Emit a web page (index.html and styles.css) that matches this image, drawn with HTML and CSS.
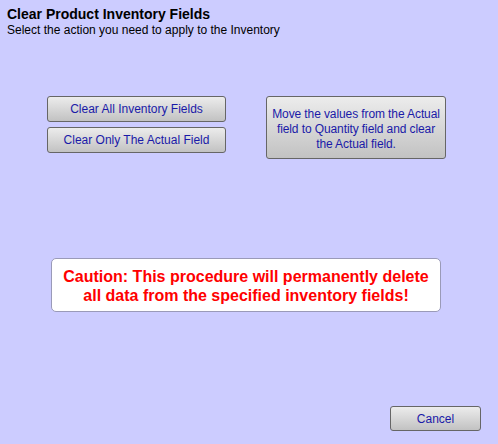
FILE: index.html
```html
<!DOCTYPE html>
<html>
<head>
<meta charset="utf-8">
<link rel="stylesheet" href="styles.css">
</head>
<body>
<div class="page">
  <header class="head">
    <h1 class="title">Clear Product Inventory Fields</h1>
    <p class="subtitle">Select the action you need to apply to the Inventory</p>
  </header>
  <div class="actions">
    <div class="col">
      <button class="btn btn-wide">Clear All Inventory Fields</button>
      <button class="btn btn-wide">Clear Only The Actual Field</button>
    </div>
    <button class="btn btn-tall">Move the values from the Actual field to Quantity field and clear the Actual field.</button>
  </div>
  <div class="caution">Caution: This procedure will permanently delete all data from the specified inventory fields!</div>
  <div class="footer">
    <button class="btn btn-cancel">Cancel</button>
  </div>
</div>
</body>
</html>
```
FILE: styles.css
```css
html, body {
  margin: 0;
  padding: 0;
  background: #ccccff;
}
body {
  width: 498px;
  height: 444px;
  overflow: hidden;
  font-family: "Liberation Sans", Arial, sans-serif;
}
.page {
  padding: 6px 0 0 7px;
}
.title {
  margin: 0;
  font-size: 14px;
  font-weight: bold;
  line-height: 17px;
  color: #000;
}
.subtitle {
  margin: 0;
  font-size: 12px;
  line-height: 14px;
  color: #000;
}
.actions {
  display: flex;
  align-items: flex-start;
  margin-top: 59px;
  margin-left: 40px;
  gap: 40px;
}
.col {
  display: flex;
  flex-direction: column;
  gap: 5px;
}
.btn {
  box-sizing: border-box;
  font-family: "Liberation Sans", Arial, sans-serif;
  font-size: 12px;
  color: #1a1aa8;
  background: linear-gradient(#ececec, #c2c2c2);
  border: 1px solid #666;
  border-radius: 3px;
  padding: 0;
  margin: 0;
  text-align: center;
}
.btn-wide {
  width: 179px;
  height: 26px;
}
.btn-tall {
  width: 180px;
  height: 63px;
  line-height: 15px;
  padding: 4px 3px 0;
  letter-spacing: -0.1px;
}
.caution {
  box-sizing: border-box;
  margin: 99px 0 0 44px;
  width: 390px;
  height: 54px;
  background: #fff;
  border: 1px solid #9a9ab8;
  border-radius: 5px;
  color: #ff0000;
  font-size: 16px;
  font-weight: bold;
  line-height: 19px;
  text-align: center;
  padding: 8px 8px 0;
}
.footer {
  display: flex;
  justify-content: flex-end;
  margin-top: 94px;
  padding-right: 17px;
}
.btn-cancel {
  width: 91px;
  height: 25px;
}
```
